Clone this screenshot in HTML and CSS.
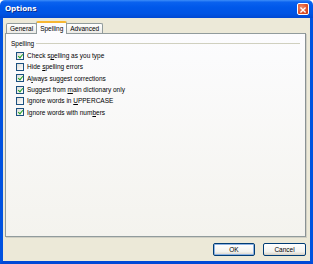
FILE: index.html
```html
<!DOCTYPE html>
<html>
<head>
<meta charset="utf-8">
<link rel="stylesheet" href="styles.css">
</head>
<body>
<div class="window">
  <div class="titlebar">
    <span class="title">Options</span>
    <span class="close"><svg width="12" height="12" viewBox="0 0 12 12"><path d="M3.5 3.5 L8.5 8.5 M8.5 3.5 L3.5 8.5" stroke="#fff" stroke-width="1.6" stroke-linecap="square"/></svg></span>
  </div>
  <div class="frame">
    <div class="tabs">
      <div class="tab">General</div>
      <div class="tab active">Spelling</div>
      <div class="tab">Advanced</div>
    </div>
    <div class="panel">
      <div class="legend"><span class="legend-text">Spelling</span><span class="legend-line"></span></div>
      <ul class="options">
        <li class="opt"><span class="box checked"></span><span>Check s<u>p</u>elling as you type</span></li>
        <li class="opt"><span class="box"></span><span>Hide <u>s</u>pelling errors</span></li>
        <li class="opt"><span class="box checked"></span><span>A<u>l</u>ways suggest corrections</span></li>
        <li class="opt"><span class="box checked"></span><span>Suggest from <u>m</u>ain dictionary only</span></li>
        <li class="opt"><span class="box"></span><span>Ignore words in <u>U</u>PPERCASE</span></li>
        <li class="opt"><span class="box checked"></span><span>Ignore words with num<u>b</u>ers</span></li>
      </ul>
    </div>
    <div class="buttons">
      <button class="btn default">OK</button>
      <button class="btn">Cancel</button>
    </div>
  </div>
</div>
</body>
</html>
```
FILE: styles.css
```css
* { box-sizing: border-box; }
html, body { margin: 0; padding: 0; background: #ffffff; }
body { font-family: "Liberation Sans", Arial, sans-serif; font-size: 6.5px; color: #000; }

.window {
  width: 313px;
  height: 264px;
  display: flex;
  flex-direction: column;
}

.titlebar {
  height: 18px;
  flex: 0 0 18px;
  display: flex;
  align-items: center;
  justify-content: space-between;
  padding: 0 4px 0 5px;
  background: linear-gradient(#3d8ef9 0%, #0a62ef 12%, #0058ea 40%, #0054e4 75%, #0048d2 100%);
  border-radius: 5px 5px 0 0;
}
.title {
  color: #fff;
  font-family: "DejaVu Sans", sans-serif;
  font-weight: bold;
  font-size: 7.2px;
  text-shadow: 1px 1px 0 #0a2a8a;
  margin-top: -1px;
}
.close {
  width: 12px;
  height: 12px;
  border: 1px solid #fff;
  border-radius: 2px;
  background: radial-gradient(circle at 35% 35%, #f28a6a 0%, #e0542c 55%, #c23a15 100%);
  display: flex;
  margin-top: -1px;
}

.frame {
  flex: 1;
  display: flex;
  flex-direction: column;
  background: #ece9d8;
  border-left: 3px solid #0052e0;
  border-right: 3px solid #0052e0;
  border-bottom: 3px solid #0048d6;
  padding: 3px 4px 0 2px;
}

.tabs {
  display: flex;
  align-items: flex-end;
  height: 12px;
  padding-left: 1px;
  position: relative;
  z-index: 1;
}
.tab {
  height: 10px;
  padding: 0 3px;
  display: flex;
  align-items: center;
  border: 1px solid #919b9c;
  border-bottom: none;
  border-radius: 2px 2px 0 0;
  background: linear-gradient(#ffffff, #ecebe6);
  margin-right: -1px;
}
.tab.active {
  height: 13px;
  margin-bottom: -1px;
  padding: 0 3px 1px;
  background: #fcfcfe;
  border-top: 2px solid #f7b732;
  position: relative;
  z-index: 2;
}

.panel {
  height: 204px;
  border: 1px solid #919b9c;
  border-right-color: #8a9294;
  background: linear-gradient(#fcfcfe, #f4f3ee);
  padding: 5px 5px 0 5px;
  box-shadow: 1px 1px 0 #d0cfc4;
}

.legend {
  display: flex;
  align-items: center;
  height: 9px;
}
.legend-text { color: #000; padding-right: 2px; }
.legend-line {
  flex: 1;
  height: 1px;
  background: #d0d0bf;
}

.options {
  list-style: none;
  margin: 0;
  padding: 2px 0 0 5px;
}
.opt {
  display: flex;
  align-items: center;
  height: 11.33px;
  gap: 3px;
}
.box {
  width: 8px;
  height: 8px;
  border: 1px solid #1c5180;
  background: linear-gradient(135deg, #dcdcd7, #ffffff);
  flex: 0 0 8px;
  position: relative;
}
.box.checked::after {
  content: "";
  position: absolute;
  left: 2px;
  top: 0px;
  width: 2px;
  height: 4px;
  border-right: 1.5px solid #21a121;
  border-bottom: 1.5px solid #21a121;
  transform: rotate(40deg);
}
u { text-decoration: underline; text-underline-offset: 1px; }

.buttons {
  display: flex;
  justify-content: flex-end;
  gap: 8px;
  padding-top: 6px;
}
.btn {
  width: 43px;
  height: 13px;
  font-family: "Liberation Sans", Arial, sans-serif;
  font-size: 6.5px;
  color: #000;
  border: 1px solid #003c74;
  border-radius: 2px;
  background: linear-gradient(#ffffff, #f3f3ef 70%, #d6d0c5);
  padding: 0;
  margin: 0;
}
.btn.default {
  width: 42px;
  box-shadow: inset 0 0 0 1px #8db2e3;
}
```
